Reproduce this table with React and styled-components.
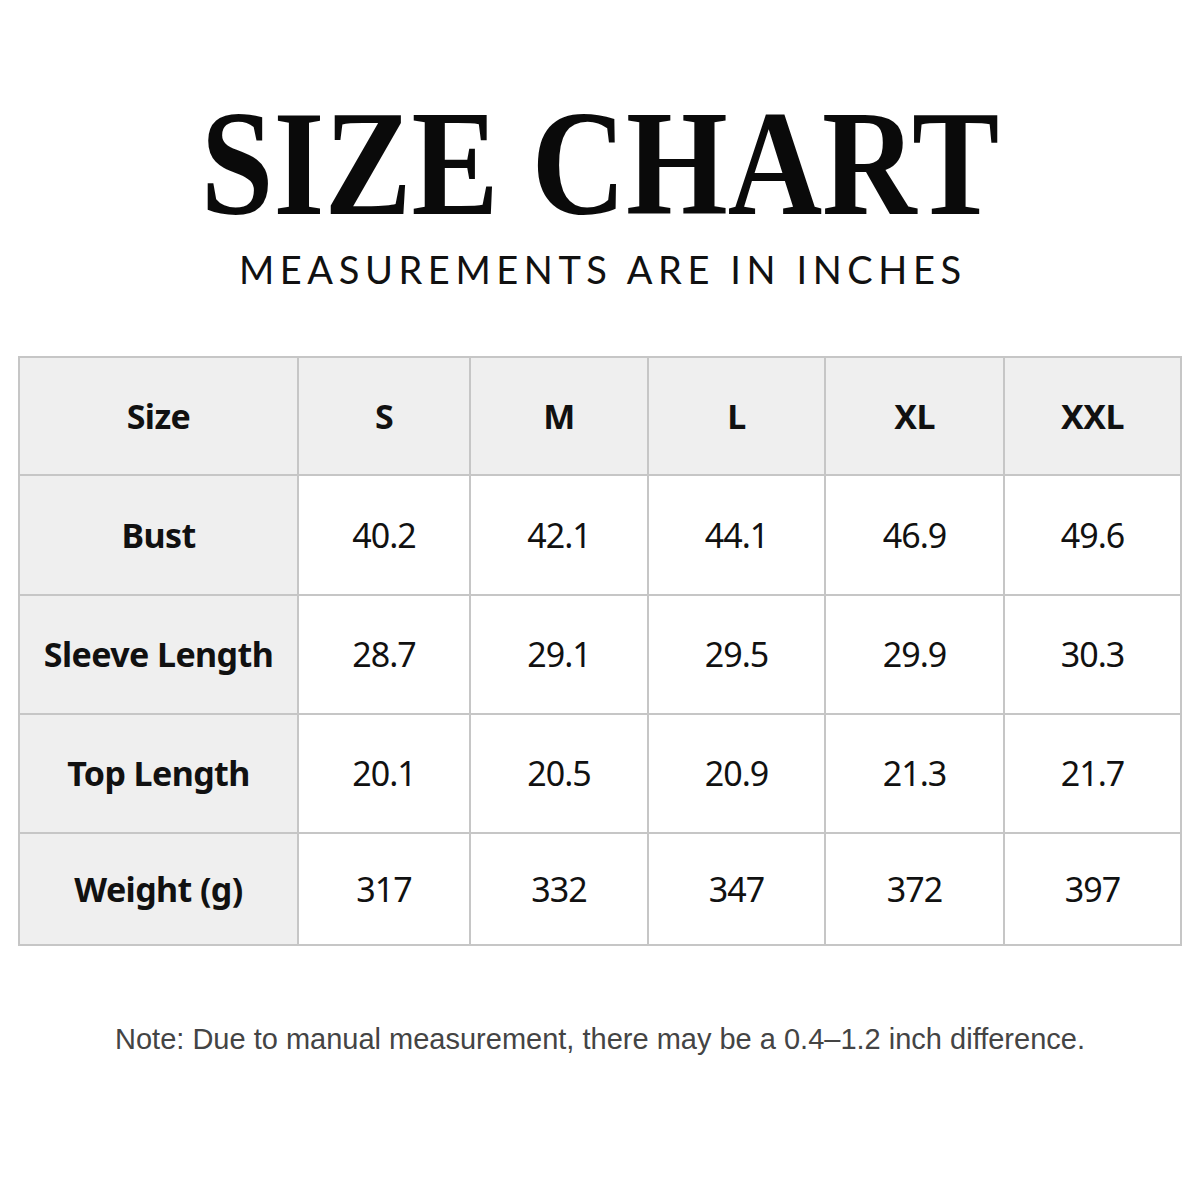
import React from "react";
import styled, { createGlobalStyle } from "styled-components";

const Global = createGlobalStyle`
  html, body { margin: 0; padding: 0; background: #ffffff; }
  #root { width: 1200px; height: 1200px; }
`;

const Page = styled.div`
  width: 1200px;
  height: 1200px;
  background: #ffffff;
  display: flex;
  flex-direction: column;
  align-items: center;
  padding-top: 80px;
  box-sizing: border-box;
`;

const Title = styled.h1`
  margin: 0;
  font-family: "Liberation Serif", "Times New Roman", serif;
  font-weight: 700;
  font-size: 151px;
  line-height: 167px;
  height: 167px;
  color: #0a0a0a;
  white-space: nowrap;
  transform: scaleX(0.866);
`;

const Subtitle = styled.div`
  margin-top: 0;
  font-family: "Lato", "Liberation Sans", sans-serif;
  font-weight: 400;
  font-size: 38px;
  line-height: 45.6px;
  letter-spacing: 5.6px;
  padding-left: 5.6px;
  color: #111111;
  white-space: nowrap;
`;

const Table = styled.div`
  margin-top: 63.4px;
  width: 1164px;
  box-sizing: border-box;
  display: grid;
  grid-template-columns: 277px 170px 176px 175px 177px 175px;
  grid-template-rows: 116px 118px 117px 117px 110px;
  gap: 2px;
  padding: 2px;
  background: #c6c6c6;
`;

const Cell = styled.div`
  display: flex;
  align-items: center;
  justify-content: center;
  background: ${(p) => (p.$shaded ? "#efefef" : "#ffffff")};
  font-family: "Noto Sans", "Open Sans", sans-serif;
  font-size: 34px;
  font-weight: ${(p) => (p.$bold ? 700 : 400)};
  color: #111111;
  letter-spacing: ${(p) => (p.$bold ? "-0.6px" : "-1px")};
  white-space: nowrap;
`;

const Note = styled.p`
  margin: 77px 0 0;
  font-family: "Liberation Sans", Arial, sans-serif;
  font-size: 29px;
  color: #444444;
  white-space: nowrap;
`;

const sizes = ["S", "M", "L", "XL", "XXL"];
const rows = [
  ["Bust", "40.2", "42.1", "44.1", "46.9", "49.6"],
  ["Sleeve Length", "28.7", "29.1", "29.5", "29.9", "30.3"],
  ["Top Length", "20.1", "20.5", "20.9", "21.3", "21.7"],
  ["Weight (g)", "317", "332", "347", "372", "397"],
];

export default function App() {
  return (
    <>
      <Global />
      <Page>
        <Title>SIZE CHART</Title>
        <Subtitle>MEASUREMENTS ARE IN INCHES</Subtitle>
        <Table>
          <Cell $shaded $bold>Size</Cell>
          {sizes.map((s) => (
            <Cell key={s} $shaded $bold>{s}</Cell>
          ))}
          {rows.map((r) => (
            <React.Fragment key={r[0]}>
              <Cell $shaded $bold>{r[0]}</Cell>
              {r.slice(1).map((v, i) => (
                <Cell key={i}>{v}</Cell>
              ))}
            </React.Fragment>
          ))}
        </Table>
        <Note>Note: Due to manual measurement, there may be a 0.4–1.2 inch difference.</Note>
      </Page>
    </>
  );
}
